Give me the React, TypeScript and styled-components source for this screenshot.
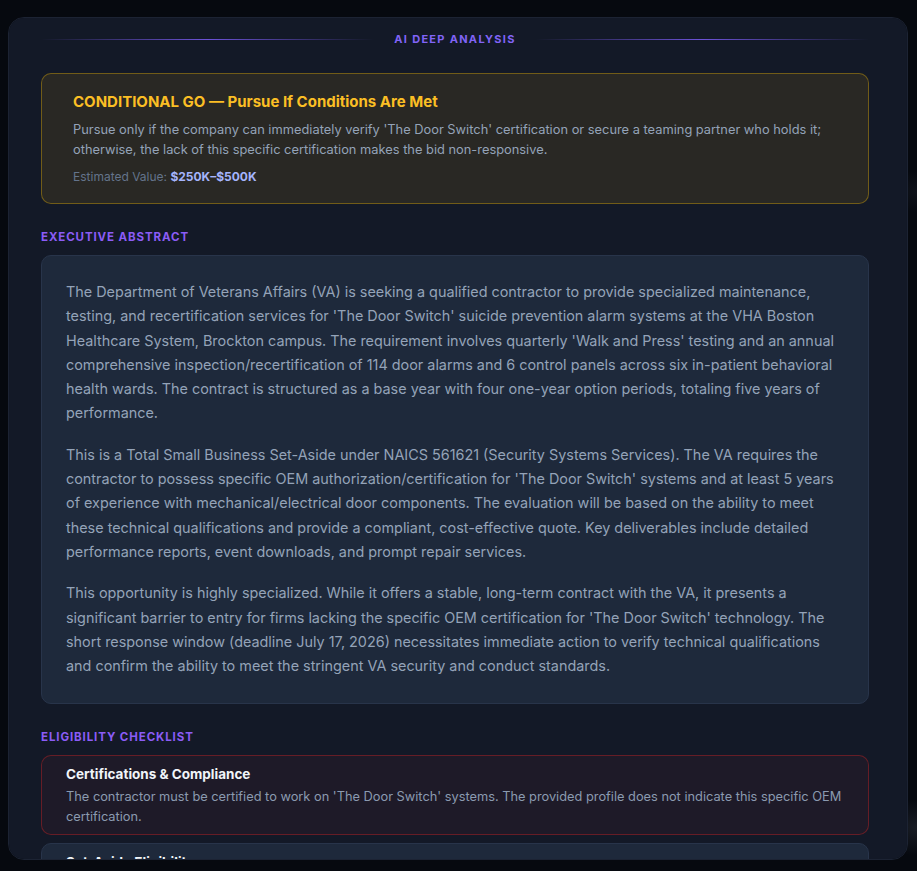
import React from "react";
import styled, { createGlobalStyle } from "styled-components";

const Global = createGlobalStyle`
  html, body { margin: 0; padding: 0; }
  body {
    background: #06090f;
    font-family: Inter, "Noto Sans", "Liberation Sans", sans-serif;
    -webkit-font-smoothing: antialiased;
  }
  * { box-sizing: border-box; }
`;

const Page = styled.div`
  height: 100vh;
  display: flex;
  justify-content: flex-start;
  align-items: flex-start;
  padding: 17px 0 0 8px;
  overflow: hidden;
  background:
    radial-gradient(60px 40px at 100% 95%, rgba(120, 130, 150, 0.16), transparent 70%),
    radial-gradient(40px 30px at 100% 22%, rgba(120, 130, 150, 0.08), transparent 70%),
    #06090f;
`;

const Modal = styled.div`
  width: 900px;
  height: 843px;
  background: #131927;
  border: 1px solid #1c2333;
  border-radius: 16px;
  overflow-y: auto;
  padding: 14px 38px 32px 32px;

  &::-webkit-scrollbar { width: 6px; }
  &::-webkit-scrollbar-track { background: transparent; }
  &::-webkit-scrollbar-thumb { background: #1f2737; border-radius: 3px; }
`;

const Divider = styled.div`
  display: flex;
  align-items: center;
  gap: 20px;
  margin-bottom: 27px;
`;

const DividerLine = styled.div`
  flex: 1;
  height: 1px;
  background: linear-gradient(90deg, transparent, rgba(124, 92, 246, 0.85), transparent);
`;

const DividerText = styled.span`
  font-size: 11px;
  line-height: 14px;
  font-weight: 700;
  letter-spacing: 1.3px;
  color: #8164f7;
  text-transform: uppercase;
`;

const Verdict = styled.div`
  background: rgba(234, 179, 8, 0.1);
  border: 1px solid rgba(234, 179, 8, 0.38);
  border-radius: 10px;
  padding: 18px 31px 17px;
`;

const VerdictTitle = styled.div`
  font-size: 15px;
  line-height: 20px;
  font-weight: 700;
  color: #fbbf24;
`;

const VerdictText = styled.p`
  margin: 8px 0 0;
  font-size: 12.85px;
  line-height: 20px;
  color: #94a3b8;
`;

const ValueLine = styled.div`
  margin-top: 8px;
  font-size: 12px;
  line-height: 18px;
  color: #64748b;
`;

const ValueAmount = styled.span`
  color: #a5b4fc;
  font-weight: 700;
`;

const Section = styled.section`
  margin-top: 25px;
`;

const SectionLabel = styled.h3`
  margin: 0 0 10px;
  font-size: 11.5px;
  line-height: 16px;
  font-weight: 700;
  letter-spacing: 0.9px;
  color: #8b5cf6;
  text-transform: uppercase;
`;

const AbstractCard = styled.div`
  background: #1e293b;
  border: 1px solid #28344a;
  border-radius: 10px;
  padding: 24px 24px 25px;
`;

const AbstractPara = styled.p`
  margin: 0;
  font-size: 14.4px;
  line-height: 24.3px;
  color: #94a3b8;
  & + & { margin-top: 17px; }
`;

const CheckList = styled.div`
  display: flex;
  flex-direction: column;
  gap: 8px;
`;

const CheckItem = styled.div<{ $status: "fail" | "pass" }>`
  border-radius: 10px;
  padding: 10px 24px 8px;
  background: ${(p) => (p.$status === "fail" ? "rgba(239, 68, 68, 0.05)" : "#1e293b")};
  border: 1px solid ${(p) => (p.$status === "fail" ? "rgba(220, 38, 38, 0.38)" : "#28344a")};
`;

const CheckTitle = styled.div`
  font-size: 13.5px;
  line-height: 17px;
  font-weight: 700;
  color: #f1f5f9;
`;

const CheckText = styled.p`
  margin: 4px 0 0;
  font-size: 12.8px;
  line-height: 19.3px;
  color: #8b9ab0;
`;

const checks: { title: string; text: string; status: "fail" | "pass" }[] = [
  {
    title: "Certifications & Compliance",
    text: "The contractor must be certified to work on 'The Door Switch' systems. The provided profile does not indicate this specific OEM certification.",
    status: "fail",
  },
  {
    title: "Set-Aside Eligibility",
    text: "This is a Total Small Business Set-Aside under NAICS 561621. The company must qualify as a small business under the applicable size standard.",
    status: "pass",
  },
  {
    title: "Experience Requirements",
    text: "At least 5 years of experience with mechanical/electrical door components is required.",
    status: "pass",
  },
];

export default function App() {
  return (
    <>
      <Global />
      <Page>
        <Modal>
          <Divider>
            <DividerLine />
            <DividerText>AI Deep Analysis</DividerText>
            <DividerLine />
          </Divider>

          <Verdict>
            <VerdictTitle>CONDITIONAL GO — Pursue If Conditions Are Met</VerdictTitle>
            <VerdictText>
              Pursue only if the company can immediately verify 'The Door Switch' certification or secure a teaming
              partner who holds it; otherwise, the lack of this specific certification makes the bid non-responsive.
            </VerdictText>
            <ValueLine>
              Estimated Value: <ValueAmount>$250K–$500K</ValueAmount>
            </ValueLine>
          </Verdict>

          <Section>
            <SectionLabel>Executive Abstract</SectionLabel>
            <AbstractCard>
              <AbstractPara>
                The Department of Veterans Affairs (VA) is seeking a qualified contractor to provide specialized
                maintenance, testing, and recertification services for 'The Door Switch' suicide prevention alarm
                systems at the VHA Boston Healthcare System, Brockton campus. The requirement involves quarterly 'Walk
                and Press' testing and an annual comprehensive inspection/recertification of 114 door alarms and 6
                control panels across six in-patient behavioral health wards. The contract is structured as a base
                year with four one-year option periods, totaling five years of performance.
              </AbstractPara>
              <AbstractPara>
                This is a Total Small Business Set-Aside under NAICS 561621 (Security Systems Services). The VA requires
                the contractor to possess specific OEM authorization/certification for 'The Door Switch' systems and at
                least 5 years of experience with mechanical/electrical door components. The evaluation will be based on
                the ability to meet these technical qualifications and provide a compliant, cost-effective quote. Key
                deliverables include detailed performance reports, event downloads, and prompt repair services.
              </AbstractPara>
              <AbstractPara>
                This opportunity is highly specialized. While it offers a stable, long-term contract with the VA, it
                presents a significant barrier to entry for firms lacking the specific OEM certification for 'The Door
                Switch' technology. The short response window (deadline July 17, 2026) necessitates immediate action to
                verify technical qualifications and confirm the ability to meet the stringent VA security and conduct
                standards.
              </AbstractPara>
            </AbstractCard>
          </Section>

          <Section>
            <SectionLabel>Eligibility Checklist</SectionLabel>
            <CheckList>
              {checks.map((c) => (
                <CheckItem key={c.title} $status={c.status}>
                  <CheckTitle>{c.title}</CheckTitle>
                  <CheckText>{c.text}</CheckText>
                </CheckItem>
              ))}
            </CheckList>
          </Section>
        </Modal>
      </Page>
    </>
  );
}
